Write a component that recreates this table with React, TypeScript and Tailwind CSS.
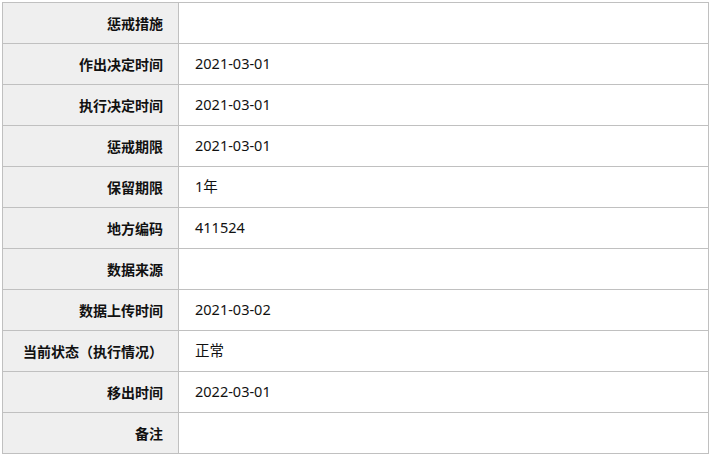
import React from "react";

const rows: [string, string][] = [
  ["惩戒措施", ""],
  ["作出决定时间", "2021-03-01"],
  ["执行决定时间", "2021-03-01"],
  ["惩戒期限", "2021-03-01"],
  ["保留期限", "1年"],
  ["地方编码", "411524"],
  ["数据来源", ""],
  ["数据上传时间", "2021-03-02"],
  ["当前状态（执行情况）", "正常"],
  ["移出时间", "2022-03-01"],
  ["备注", ""],
];

export default function App() {
  return (
    <div className="w-[713px] h-[456px] bg-white pt-[2px] pl-[2px]">
      <div className="grid w-[707px] grid-cols-[176px_530px] border-l border-t border-[#c0c0c0]">
        {rows.map(([label, value]) => (
          <React.Fragment key={label}>
            <div
              className="flex h-[41px] items-center justify-end border-b border-r border-[#c0c0c0] bg-[#efefef] pr-[15px] text-[14px] font-bold text-[#111]"
              style={{ fontFamily: '"Noto Sans CJK SC", sans-serif' }}
            >
              {label}
            </div>
            <div
              className="flex h-[41px] items-center border-b border-r border-[#c0c0c0] bg-white pl-[16px] text-[14.5px] text-[#111]"
              style={{ fontFamily: '"Noto Sans", "Noto Sans CJK SC", sans-serif' }}
            >
              {value}
            </div>
          </React.Fragment>
        ))}
      </div>
    </div>
  );
}
